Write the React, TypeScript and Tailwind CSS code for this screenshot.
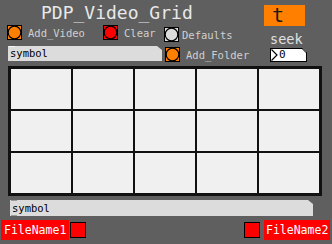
import React from 'react';

const Bang = ({ fill }: { fill: string }) => (
  <svg width="15" height="15" viewBox="0 0 15 15" className="shrink-0 block">
    <rect x="0.5" y="0.5" width="14" height="14" fill={fill} stroke="#000" />
    <circle cx="7.5" cy="7.5" r="6.3" fill={fill} stroke="#000" strokeWidth="1.2" />
  </svg>
);

const Square = () => (
  <div className="w-[16px] h-[16px] bg-[#ff0000] border border-black shrink-0" />
);

const PDPGrid = () => {
  return (
    <div className="w-[332px] h-[244px] bg-[#5f5f5f] overflow-hidden flex flex-col font-['DejaVu_Sans_Mono',monospace]">
      {/* header */}
      <div className="h-[24px] flex items-start">
        <div className="ml-[41px] mt-[4px] text-[18px] leading-[18px] text-[#e8e8e8] whitespace-pre">PDP_Video_Grid</div>
        <div className="ml-auto mr-[27px] mt-[5px] w-[41px] h-[21px] bg-[#ff8000] text-[#1a1a1a] text-[20px] leading-[20px] pl-[8px] relative z-10">t</div>
      </div>

      {/* controls */}
      <div className="h-[42px] flex">
        <div className="ml-[7px] w-[155px] flex flex-col">
          <div className="mt-[1px] h-[15px] flex items-center">
            <Bang fill="#ff8000" />
            <div className="w-[81px] pl-[6px] text-[10.5px] leading-[12px] text-[#d0d0d0] whitespace-pre">Add_Video</div>
            <Bang fill="#ff0000" />
            <div className="pl-[6px] text-[10.5px] leading-[12px] text-[#d0d0d0]">Clear</div>
          </div>
          <div className="mt-[6px] ml-[1px] w-[154px] h-[15px] bg-[#dcdcdc] [clip-path:polygon(0_0,calc(100%-5px)_0,100%_4px,100%_100%,0_100%)] relative">
            <span className="absolute left-[1px] top-0 w-[6px] h-[1px] bg-[#f4f4f4]" />
            <div className="pl-[2px] text-[10.5px] leading-[15px] text-black">symbol</div>
          </div>
        </div>

        <div className="ml-[2px] w-[100px] flex flex-col">
          <div className="mt-[3px] h-[15px] flex items-center">
            <Bang fill="#dcdcdc" />
            <div className="pl-[3px] text-[10.5px] leading-[12px] text-[#d0d0d0]">Defaults</div>
          </div>
          <div className="mt-[5px] ml-[1px] h-[15px] flex items-center">
            <Bang fill="#ff8000" />
            <div className="pl-[6px] text-[10.5px] leading-[12px] text-[#d0d0d0]">Add_Folder</div>
          </div>
        </div>

        <div className="ml-[6px] w-[37px] flex flex-col">
          <div className="mt-[6px] h-[18px] text-[13.5px] leading-[18px] text-[#e0e0e0]">seek</div>
          <div className="h-[14px] w-[37px] bg-white border border-black relative flex items-center">
            <svg width="7" height="12" viewBox="0 0 7 12" className="block">
              <polyline points="0.5,0.5 6,6 0.5,11.5" fill="none" stroke="#000" strokeWidth="1.2" />
            </svg>
            <span className="ml-[1px] text-[11px] leading-[12px] text-black">0</span>
            <svg width="5" height="5" viewBox="0 0 5 5" className="absolute right-[-1px] top-[-1px] block">
              <polygon points="0,0 5,0 5,5" fill="#5f5f5f" />
              <line x1="0" y1="0.5" x2="4.5" y2="5" stroke="#000" strokeWidth="1" />
            </svg>
          </div>
        </div>
      </div>

      {/* grid */}
      <div className="ml-[8px] w-[314px] h-[130px] bg-[#111111] p-[3px] grid grid-cols-5 grid-rows-3 gap-[2px] shrink-0">
        {Array.from({ length: 15 }).map((_, i) => (
          <div key={i} className="bg-[#f0f0f0]" />
        ))}
      </div>

      {/* symbol out */}
      <div className="mt-[4px] ml-[10px] w-[303px] h-[16px] bg-[#dcdcdc] [clip-path:polygon(0_0,calc(100%-5px)_0,100%_4px,100%_100%,0_100%)] relative shrink-0">
        <span className="absolute left-[1px] top-0 w-[6px] h-[1px] bg-[#9a9a9a]" />
        <span className="absolute left-[1px] bottom-0 w-[6px] h-[1px] bg-[#9a9a9a]" />
        <div className="pl-[2px] text-[10.5px] leading-[16px] text-black">symbol</div>
      </div>

      {/* file names */}
      <div className="mt-[3px] h-[21px] flex items-center">
        <div className="ml-[1px] w-[68px] h-[20px] bg-[#ff0000] text-white text-[11.5px] leading-[20px] pl-[3px]">FileName1</div>
        <div className="ml-[1px]">
          <Square />
        </div>
        <div className="ml-auto">
          <Square />
        </div>
        <div className="ml-[4px] mr-[2px] w-[66px] h-[20px] bg-[#ff0000] text-white text-[11.5px] leading-[20px] pl-[2px]">FileName2</div>
      </div>
    </div>
  );
};

export default PDPGrid;
